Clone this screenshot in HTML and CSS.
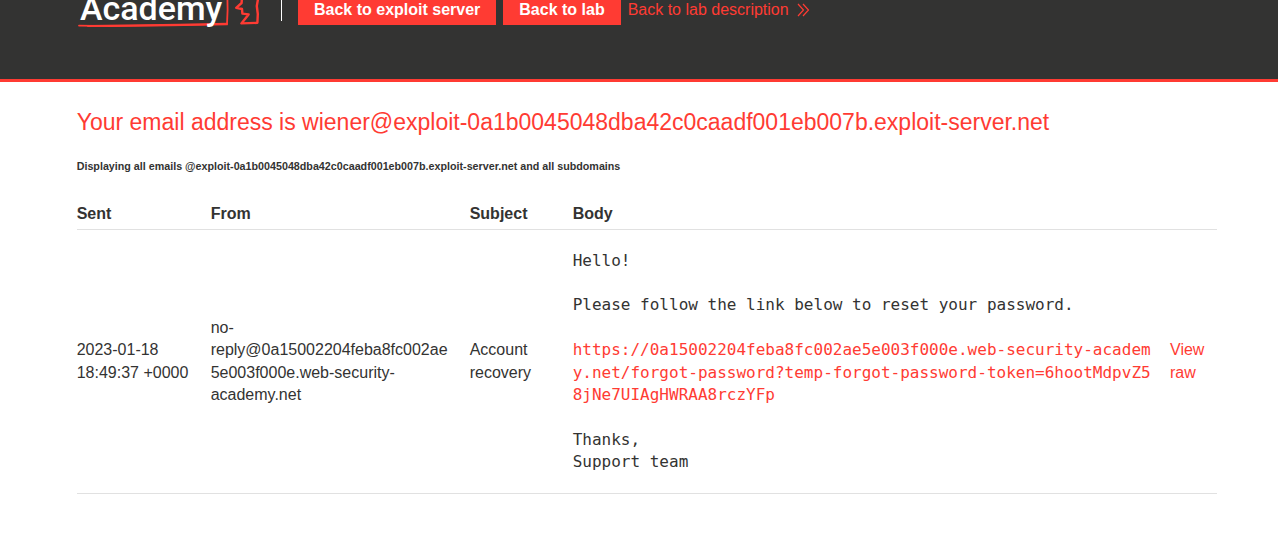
FILE: index.html
```html
<!DOCTYPE html>
<html lang="en">
<head>
<meta charset="utf-8">
<title>Exploit Server: Email client</title>
<meta name="viewport" content="width=device-width, initial-scale=1">
<link rel="stylesheet" href="styles.css">
</head>
<body>
<header class="lab-header">
  <div class="lab-header-row">
    <svg class="logo" width="184" height="60" viewBox="77 -30 184 60" role="img" aria-label="Academy">
      <g fill="none" stroke="#ff3b33" stroke-linecap="round" stroke-linejoin="round">
        <path d="M79 25.6 L110 26.2 L170 25.4 L227 24.4 L227.6 10 L227 -28" stroke-width="1.8"/>
        <path d="M88 26 L180 24.8 L227 23.8" stroke-width="2"/>
        <path d="M242 -28 L242 -3 L241.6 3 L236.2 7.8 L242 9 L242.4 13.6 L248.6 14.4 L241.4 23.4 L257.4 22.8 L257.8 14 L256.8 6 L258.2 -2 L258 -28" stroke-width="2.4"/>
      </g>
      <text class="logo-text" x="80" y="20">Academy</text>
    </svg>
    <nav class="lab-nav">
      <a class="button" href="#exploit-server">Back to exploit server</a>
      <a class="button" href="#lab">Back to lab</a>
      <a class="link-back" href="#description">Back to lab description
        <svg width="13" height="14" viewBox="0 0 13 14" aria-hidden="true"><path d="M1 1 L6.5 7 L1 13 M6 1 L11.5 7 L6 13" fill="none" stroke="currentColor" stroke-width="1.2"/></svg>
      </a>
    </nav>
  </div>
</header>
<main class="content">
  <h1 class="title">Your email address is wiener@exploit-0a1b0045048dba42c0caadf001eb007b.exploit-server.net</h1>
  <h6 class="note">Displaying all emails @exploit-0a1b0045048dba42c0caadf001eb007b.exploit-server.net and all subdomains</h6>
  <table class="emails">
    <colgroup>
      <col class="col-sent"><col class="col-from"><col class="col-subject"><col><col class="col-raw">
    </colgroup>
    <thead>
      <tr><th scope="col">Sent</th><th scope="col">From</th><th scope="col">Subject</th><th scope="col">Body</th><td></td></tr>
    </thead>
    <tbody>
      <tr>
        <td>2023-01-18 18:49:37 +0000</td>
        <td>no-reply@0a15002204feba8fc002ae5e003f000e.web-security-academy.net</td>
        <td>Account recovery</td>
        <td class="body"><pre>Hello!

Please follow the link below to reset your password.

<a href="#reset">https://0a15002204feba8fc002ae5e003f000e.web-security-academy.net/forgot-password?temp-forgot-password-token=6hootMdpvZ58jNe7UIAgHWRAA8rczYFp</a>

Thanks,
Support team</pre></td>
        <td class="raw"><a href="#raw">View raw</a></td>
      </tr>
    </tbody>
  </table>
</main>
</body>
</html>
```
FILE: styles.css
```css
* {
  box-sizing: border-box;
}

body {
  margin: 0;
  background: #fff;
  color: #333332;
  font: 16px/1.4 "Liberation Sans", Arial, sans-serif;
}

a {
  color: #ff3b33;
  text-decoration: none;
}

.lab-header {
  overflow: hidden;
  padding: 0 61px 49px 77px;
  background: #333332;
  border-bottom: 3px solid #ff3b33;
}

.lab-header-row {
  display: flex;
  align-items: flex-end;
  margin-top: -30px;
}

.logo {
  flex: none;
}

.logo-text {
  fill: #fff;
  font: 500 34px Roboto, sans-serif;
}

.lab-nav {
  display: flex;
  align-items: flex-end;
  gap: 7px;
  height: 60px;
  margin-left: 20px;
  padding: 0 0 5px 17px;
  background: linear-gradient(#fff, #fff) 0 0 / 1px 51px no-repeat;
}

.button {
  padding: 4px 16px 3px;
  background: #ff3b33;
  color: #fff;
  font-weight: 700;
  line-height: 24px;
}

.link-back {
  display: flex;
  align-items: center;
  gap: 8px;
  padding: 4px 0 3px;
  line-height: 24px;
}

.content {
  padding: 24px 61px 45px 6%;
}

.title {
  margin: 0;
  color: #ff3b33;
  font-size: 23px;
  font-weight: 400;
}

.note {
  margin: 21px 0 29px;
}

.emails {
  width: 100%;
  border-collapse: collapse;
  table-layout: fixed;
}

.col-sent { width: 134px; }
.col-from { width: 259px; }
.col-subject { width: 103px; }
.col-raw { width: 47px; }

.emails tr {
  border-bottom: 1px solid #e1e1e1;
}

.emails th {
  padding: 0 0 3px;
  text-align: left;
}

.emails td {
  padding: 0 22px 0 0;
  overflow-wrap: anywhere;
}

.emails .body {
  padding: 20px 18px 20px 0;
}

.emails .raw {
  padding-right: 8px;
}

.emails pre {
  margin: 0;
  font-family: "DejaVu Sans Mono", monospace;
  font-size: 16px;
  white-space: pre-wrap;
  word-break: break-all;
}
```
